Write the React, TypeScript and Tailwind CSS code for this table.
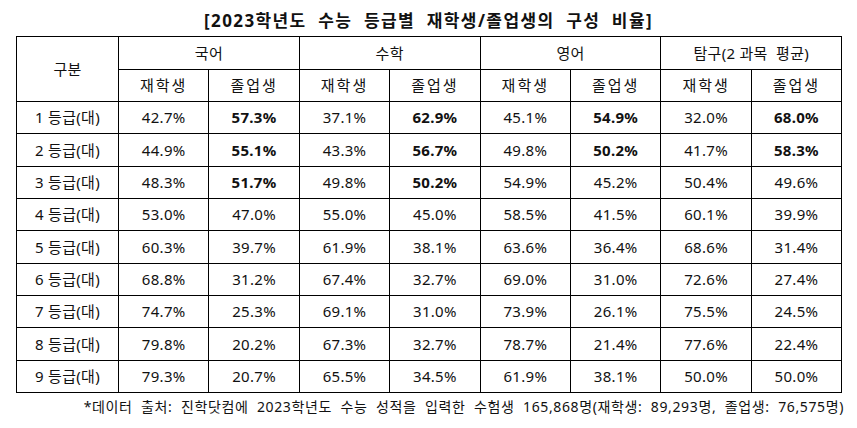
import React from "react";

type Row = {
  grade: string;
  values: string[];
  bold: number[];
};

const subjects = ["국어", "수학", "영어", "탐구(2 과목  평균)"];

const rows: Row[] = [
  { grade: "1 등급(대)", values: ["42.7%", "57.3%", "37.1%", "62.9%", "45.1%", "54.9%", "32.0%", "68.0%"], bold: [1, 3, 5, 7] },
  { grade: "2 등급(대)", values: ["44.9%", "55.1%", "43.3%", "56.7%", "49.8%", "50.2%", "41.7%", "58.3%"], bold: [1, 3, 5, 7] },
  { grade: "3 등급(대)", values: ["48.3%", "51.7%", "49.8%", "50.2%", "54.9%", "45.2%", "50.4%", "49.6%"], bold: [1, 3] },
  { grade: "4 등급(대)", values: ["53.0%", "47.0%", "55.0%", "45.0%", "58.5%", "41.5%", "60.1%", "39.9%"], bold: [] },
  { grade: "5 등급(대)", values: ["60.3%", "39.7%", "61.9%", "38.1%", "63.6%", "36.4%", "68.6%", "31.4%"], bold: [] },
  { grade: "6 등급(대)", values: ["68.8%", "31.2%", "67.4%", "32.7%", "69.0%", "31.0%", "72.6%", "27.4%"], bold: [] },
  { grade: "7 등급(대)", values: ["74.7%", "25.3%", "69.1%", "31.0%", "73.9%", "26.1%", "75.5%", "24.5%"], bold: [] },
  { grade: "8 등급(대)", values: ["79.8%", "20.2%", "67.3%", "32.7%", "78.7%", "21.4%", "77.6%", "22.4%"], bold: [] },
  { grade: "9 등급(대)", values: ["79.3%", "20.7%", "65.5%", "34.5%", "61.9%", "38.1%", "50.0%", "50.0%"], bold: [] },
];

const cell = "border border-black text-center align-middle p-0";

export default function App() {
  return (
    <div
      className="w-[857px] h-[428px] bg-white text-[#111] px-4 pt-[9px]"
      style={{ fontFamily: '"Noto Sans", "Noto Sans CJK KR", sans-serif' }}
    >
      <h1 className="h-[27px] text-center text-[17px] font-bold leading-[24px] tracking-[1.4px] whitespace-pre">
        [2023학년도  수능  등급별  재학생/졸업생의  구성  비율]
      </h1>

      <table className="w-[825px] table-fixed border-collapse text-[15px] tracking-[0.3px]">
        <colgroup>
          <col className="w-[102px]" />
          {Array.from({ length: 8 }).map((_, i) => (
            <col key={i} className="w-[90.4px]" />
          ))}
        </colgroup>
        <thead>
          <tr className="h-[33px]">
            <th rowSpan={2} className={`${cell} font-normal`}>
              구분
            </th>
            {subjects.map((s) => (
              <th key={s} colSpan={2} className={`${cell} font-normal whitespace-pre`}>
                {s}
              </th>
            ))}
          </tr>
          <tr className="h-[32px]">
            {subjects.map((s) => (
              <React.Fragment key={s}>
                <th className={`${cell} font-normal tracking-[2px]`}>재학생</th>
                <th className={`${cell} font-normal tracking-[2px]`}>졸업생</th>
              </React.Fragment>
            ))}
          </tr>
        </thead>
        <tbody>
          {rows.map((r) => (
            <tr key={r.grade} className="h-[32.33px]">
              <td className={cell}>{r.grade}</td>
              {r.values.map((v, i) => (
                <td key={i} className={`${cell} ${r.bold.includes(i) ? "font-bold" : ""}`}>
                  {v}
                </td>
              ))}
            </tr>
          ))}
        </tbody>
      </table>

      <p className="mt-[4px] text-right text-[14px] leading-[20px] tracking-[0.62px] whitespace-pre mr-[-3px]">
        *데이터  출처:  진학닷컴에  2023학년도  수능  성적을  입력한  수험생  165,868명(재학생:  89,293명,  졸업생:  76,575명)
      </p>
    </div>
  );
}
